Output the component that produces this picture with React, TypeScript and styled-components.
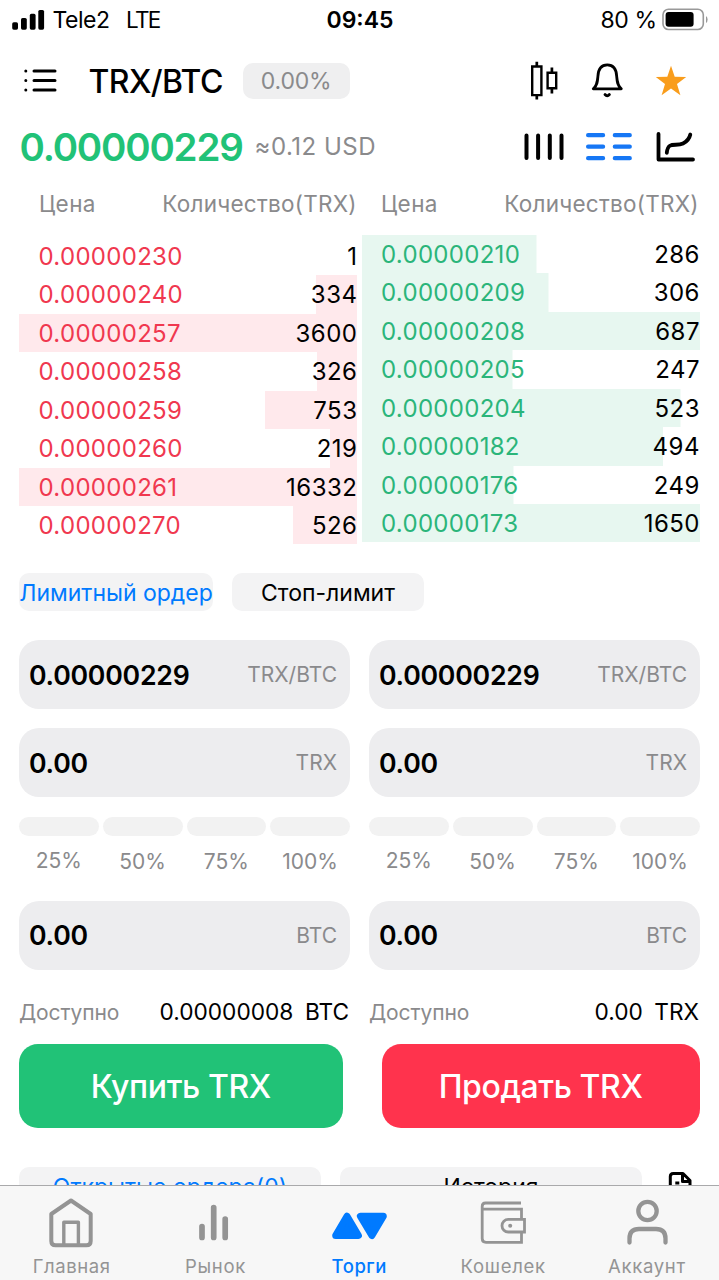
import React from 'react';
import styled, { createGlobalStyle } from 'styled-components';

const colors = {
  green: '#21c277',
  red: '#ff334d',
  blue: '#007aff',
  grey: '#8a8a8c',
  field: '#ededef',
  chip: '#f3f3f4',
};

const Global = createGlobalStyle`
  * { box-sizing: border-box; }
  body { margin: 0; background: #fff; color: #000; font-family: Inter, "Liberation Sans", sans-serif; }
  button { font: inherit; border: 0; padding: 0; color: inherit; }
`;

const Screen = styled.div`
  width: 719px;
  height: 1280px;
  display: flex;
  flex-direction: column;
  overflow: hidden;
`;

const Content = styled.main`
  height: 1185px;
  overflow: hidden;
  flex: none;
`;

const Label = styled.span<{ $size: number; $spacing?: number; $weight?: number; $color?: string; $drop?: number }>`
  font-size: ${p => p.$size}px;
  letter-spacing: ${p => p.$spacing ?? 0}px;
  margin-right: ${p => -(p.$spacing ?? 0)}px;
  padding-top: ${p => (p.$drop ?? 0) * 2}px;
  font-weight: ${p => p.$weight ?? 400};
  color: ${p => p.$color ?? 'inherit'};
  white-space: pre;
  line-height: 1.2;
`;

const StatusBar = styled.header`
  height: 40px;
  padding: 0 11px 0 12px;
  display: grid;
  grid-template-columns: 1fr auto 1fr;
  align-items: center;
`;

const StatusGroup = styled.div<{ $end?: boolean }>`
  display: flex;
  align-items: center;
  justify-content: ${p => (p.$end ? 'flex-end' : 'flex-start')};
  gap: ${p => (p.$end ? 5 : 7.5)}px;
`;

const Network = styled.div`
  display: flex;
  gap: 16px;
`;

const PairBar = styled.div`
  height: 82px;
  padding: 0 32px 0 24px;
  display: flex;
  align-items: center;
`;

const PairName = styled.h1`
  margin: 0 0 0 31.5px;
  padding-top: 1px;
  width: 154px;
  font-size: 32px;
  letter-spacing: -0.6px;
  font-weight: 500;
  line-height: 38px;
  white-space: nowrap;
`;

const ChangeBadge = styled.span`
  width: 107.5px;
  height: 36px;
  border-radius: 10px;
  background: #efeff0;
  display: flex;
  align-items: center;
  justify-content: center;
`;

const IconRow = styled.div<{ $first: number; $second: number }>`
  margin-left: auto;
  display: flex;
  align-items: center;
  svg:nth-child(2) { margin-left: ${p => p.$first}px; }
  svg:nth-child(3) { margin-left: ${p => p.$second}px; }
`;

const PriceBar = styled.div`
  height: 50px;
  padding: 0 23px 0 19.5px;
  display: flex;
  align-items: center;
`;

const LastPrice = styled.strong`
  width: 235px;
  padding-top: 1px;
  font-size: 38.5px;
  letter-spacing: -1.2px;
  line-height: 48px;
  font-weight: 600;
  color: ${colors.green};
  white-space: nowrap;
  margin-top: -2px;
`;

const BookHead = styled.div`
  height: 63px;
  padding: 16px 20px 0 39px;
  display: grid;
  grid-template-columns: 317.5px 317.5px;
  column-gap: 24.5px;
`;

const HeadPair = styled.div`
  display: flex;
  justify-content: space-between;
  align-items: center;
  height: 31.5px;
`;

const Book = styled.section`
  display: grid;
  grid-template-columns: 338px 338px;
  column-gap: 4.5px;
  padding-left: 19px;
  height: 338px;
`;

const Side = styled.div<{ $offset?: number }>`
  padding-top: ${p => p.$offset ?? 0}px;
`;

const BookRow = styled.div<{ $fill: number; $side: 'ask' | 'bid' }>`
  height: 38px;
  &:nth-child(even):not(:last-child) { height: 39px; }
  padding: 0 0 0 19.5px;
  display: flex;
  align-items: center;
  justify-content: space-between;
  background: linear-gradient(${p => (p.$side === 'ask' ? '#ffe9ec, #ffe9ec' : '#e7f7f0, #e7f7f0')}) no-repeat
    ${p => (p.$side === 'ask' ? 'right' : 'left')} / ${p => p.$fill}px 100%;
`;

const OrderTabs = styled.div`
  display: flex;
  gap: 19px;
  padding-left: 19px;
  height: 67px;
`;

const Chip = styled.button<{ $width: number; $active?: boolean }>`
  width: ${p => p.$width}px;
  height: 38px;
  border-radius: 10px;
  background: ${colors.chip};
  color: ${p => (p.$active ? colors.blue : '#000')};
  display: flex;
  align-items: center;
  justify-content: center;
  flex: none;
`;

const Forms = styled.section`
  display: grid;
  grid-template-columns: 331px 331px;
  column-gap: 19px;
  padding-left: 19px;
  height: 404px;
`;

const Form = styled.div`
  display: flex;
  flex-direction: column;
`;

const Field = styled.div<{ $gap: number }>`
  height: 69px;
  margin-bottom: ${p => p.$gap}px;
  padding: 0 13px 0 10px;
  border-radius: 20px;
  background: ${colors.field};
  display: flex;
  align-items: center;
  justify-content: space-between;
`;

const Steps = styled.div`
  display: grid;
  grid-template-columns: repeat(4, 1fr);
  column-gap: 4px;
  height: 84px;
`;

const Step = styled.div`
  display: flex;
  flex-direction: column;
  align-items: center;
  gap: 12px;
  &:not(:first-child) { gap: 13px; }
  &::before {
    content: '';
    width: 100%;
    height: 19px;
    border-radius: 10px;
    background: #f2f2f2;
  }
`;

const Balance = styled.div`
  display: flex;
  align-items: center;
  justify-content: space-between;
  height: 30px;
  padding-right: 1px;
`;

const Funds = styled.div`
  display: flex;
  gap: 11.5px;
`;

const Actions = styled.div`
  display: flex;
  justify-content: space-between;
  padding: 0 19px;
  height: 123px;
`;

const ActionButton = styled.button<{ $width: number; $bg: string }>`
  width: ${p => p.$width}px;
  height: 84px;
  border-radius: 19px;
  background: ${p => p.$bg};
  color: #fff;
  display: flex;
  align-items: center;
  justify-content: center;
`;

const HistoryTabs = styled.div`
  display: flex;
  gap: 19px;
  padding-left: 19px;
`;

const DocSlot = styled.div`
  margin: 5px 0 0 7px;
`;

const TabBar = styled.nav`
  height: 95px;
  flex: none;
  background: #f7f7f7;
  border-top: 1px solid #a9a9ab;
  display: grid;
  grid-template-columns: repeat(5, 1fr);
`;

const TabItem = styled.a<{ $active?: boolean }>`
  color: ${p => (p.$active ? colors.blue : '#949494')};
  display: flex;
  flex-direction: column;
  align-items: center;
  padding: 8px 1px 0 0;
  gap: 5px;
`;

const Icon = styled.svg`
  display: block;
  flex: none;
  overflow: visible;
`;

const Line = styled(Icon).attrs({ fill: 'none', stroke: 'currentColor' })``;

const asks: [string, string, number][] = [
  ['0.00000230', '1', 0],
  ['0.00000240', '334', 41.5],
  ['0.00000257', '3600', 338],
  ['0.00000258', '326', 40.5],
  ['0.00000259', '753', 92],
  ['0.00000260', '219', 27],
  ['0.00000261', '16332', 338],
  ['0.00000270', '526', 64.5],
];

const bids: [string, string, number][] = [
  ['0.00000210', '286', 174.5],
  ['0.00000209', '306', 186.5],
  ['0.00000208', '687', 338],
  ['0.00000205', '247', 150.5],
  ['0.00000204', '523', 318.5],
  ['0.00000182', '494', 301],
  ['0.00000176', '249', 151.5],
  ['0.00000173', '1650', 338],
];

const OrderSide = ({ rows, side }: { rows: [string, string, number][]; side: 'ask' | 'bid' }) => (
  <Side $offset={side === 'ask' ? 2 : 0}>
    {rows.map(([price, amount, fill]) => (
      <BookRow key={price} $fill={fill} $side={side}>
        <Label $size={24} $spacing={0.3} $drop={1.3} $color={side === 'ask' ? '#f0384f' : '#2bb57a'}>{price}</Label>
        <Label $size={24} $spacing={0.5} $drop={1.3}>{amount}</Label>
      </BookRow>
    ))}
  </Side>
);

const Amount = ({ value, unit }: { value: string; unit: string }) => (
  <>
    <Label $size={26.7} $spacing={-0.25} $drop={0.5} $weight={600}>{value}</Label>
    <Label $size={21} $drop={0.5} $color={colors.grey}>{unit}</Label>
  </>
);

const OrderForm = ({ balance, unit }: { balance: string; unit: string }) => (
  <Form>
    <Field $gap={19}><Amount value="0.00000229" unit="TRX/BTC" /></Field>
    <Field $gap={19.5}><Amount value="0.00" unit="TRX" /></Field>
    <Steps>
      {['25%', '50%', '75%', '100%'].map(s => (
        <Step key={s}><Label $size={21} $color={colors.grey}>{s}</Label></Step>
      ))}
    </Steps>
    <Field $gap={27}><Amount value="0.00" unit="BTC" /></Field>
    <Balance>
      <Label $size={21} $spacing={-0.1} $drop={0.6} $color={colors.grey}>Доступно</Label>
      <Funds>
        <Label $size={22.7} $drop={0.6}>{balance}</Label>
        <Label $size={22.7} $drop={0.6}>{unit}</Label>
      </Funds>
    </Balance>
  </Form>
);

export default function App() {
  return (
    <Screen>
      <Global />
      <Content>
        <StatusBar>
          <StatusGroup>
            <Icon width="33" height="20" viewBox="0 0 33 20">
              <rect x="0.2" y="12.3" width="5.8" height="7.4" rx="1.6" />
              <rect x="9" y="8" width="5.8" height="11.7" rx="1.6" />
              <rect x="17.8" y="3.8" width="5.8" height="15.9" rx="1.6" />
              <rect x="26.3" y="0" width="5.8" height="19.7" rx="1.6" />
            </Icon>
            <Network>
              <Label $size={23} $spacing={-0.5} $drop={0.5}>Tele2</Label>
              <Label $size={22.5} $spacing={-1.6} $drop={0.2}>LTE</Label>
            </Network>
          </StatusGroup>
          <Label $size={23} $weight={600} $drop={0.5}>09:45</Label>
          <StatusGroup $end>
            <Label $size={23} $spacing={-0.4} $drop={0.8}>80 %</Label>
            <Line width="46" height="22" viewBox="0 0 46 22">
              <rect x="1" y="0.3" width="40.3" height="20.2" rx="5.5" stroke="#999" strokeWidth="1.6" />
              <rect x="3.6" y="3.1" width="28" height="14.6" rx="3" fill="#000" stroke="none" />
              <path d="M44 7v7q1.6-1 1.6-3.5t-1.6-3.5z" fill="#999" stroke="none" />
            </Line>
          </StatusGroup>
        </StatusBar>

        <PairBar>
          <Line width="33" height="22" viewBox="0 0 33 22" strokeLinecap="round" strokeWidth="3">
            <path d="M10 1h21M10 10.5h21M10 20h21" />
            <path d="M1.8 1h.01M1.8 10.5h.01M1.8 20h.01" />
          </Line>
          <PairName>TRX/BTC</PairName>
          <ChangeBadge><Label $size={23} $spacing={-0.2} $drop={1} $color={colors.grey}>0.00%</Label></ChangeBadge>
          <IconRow $first={34} $second={32}>
            <Line width="28" height="40" viewBox="0 0 28 40" strokeWidth="2.4">
              <path d="M3.2 5.5h9.2v28.6H3.2zM18.6 11.8h8.6v15.4h-8.6z" />
              <path d="M7.8.8v4.7M7.8 34v4.6M22.9 6.5v5M22.9 27v5.5" strokeWidth="2.7" />
            </Line>
            <Line width="32" height="36" viewBox="0 0 32 36" strokeWidth="2.8" strokeLinecap="round" strokeLinejoin="round">
              <path d="M2.3 25.8h28c-4-3.4-4.2-7.6-4.6-12.5C25.3 6 21.8 1.9 16.3 1.9S7.3 6 6.9 13.3C6.5 18.2 6.3 22.4 2.3 25.8z" />
              <path d="M14 31.5q2.2 2.6 4.4 0" />
            </Line>
            <Icon width="32" height="32" viewBox="0 0 32 32">
              <path fill="#f99d1c" d="M16 .8l3.7 11 11.5.2-9.2 7 3.4 11.3L16 23.5l-9.4 6.8L10 19 .8 12l11.5-.2z" />
            </Icon>
          </IconRow>
        </PairBar>

        <PriceBar>
          <LastPrice>0.00000229</LastPrice>
          <Label $size={24} $spacing={0.5} $drop={0.8} $color={colors.grey}>≈0.12 USD</Label>
          <IconRow $first={21} $second={23}>
            <Line width="40" height="28" viewBox="0 0 40 28" strokeWidth="4" strokeLinecap="round">
              <path d="M2.5 2.5V25M14.1 2.5V25M25.8 2.5V25M37.5 2.5V25" />
            </Line>
            <Line width="48" height="28" viewBox="0 0 48 28" strokeWidth="4.2" strokeLinecap="round" color="#1677f5">
              <path d="M3.1 2.2h15M3.1 13.7h15M3.1 25.2h15M29.8 2.2h15M29.8 13.7h15M29.8 25.2h15" />
            </Line>
            <Line width="40" height="30" viewBox="0 0 40 30" strokeWidth="3.8" strokeLinecap="round" strokeLinejoin="round">
              <path d="M2.5 2v25.5H37" />
              <path d="M10.8 20.8C12 8.5 20 15 27 11.5Q33 8.500 34.3 2.5" />
            </Line>
          </IconRow>
        </PriceBar>

        <BookHead>
          {[0, 1].map(i => (
            <HeadPair key={i}>
              <Label $size={22.5} $spacing={0.4} $color={colors.grey}>Цена</Label>
              <Label $size={22.5} $spacing={0.25} $color={colors.grey}>Количество(TRX)</Label>
            </HeadPair>
          ))}
        </BookHead>
        <Book>
          <OrderSide rows={asks} side="ask" />
          <OrderSide rows={bids} side="bid" />
        </Book>

        <OrderTabs>
          <Chip $width={194} $active><Label $size={23} $drop={2}>Лимитный ордер</Label></Chip>
          <Chip $width={192}><Label $size={23} $drop={2}>Стоп-лимит</Label></Chip>
        </OrderTabs>

        <Forms>
          <OrderForm balance="0.00000008" unit="BTC" />
          <OrderForm balance="0.00" unit="TRX" />
        </Forms>

        <Actions>
          <ActionButton $width={324} $bg={colors.green}><Label $size={32} $weight={450} $spacing={-0.4} $drop={1}>Купить TRX</Label></ActionButton>
          <ActionButton $width={318.5} $bg={colors.red}><Label $size={32} $weight={450} $spacing={-0.4} $drop={1}>Продать TRX</Label></ActionButton>
        </Actions>

        <HistoryTabs>
          <Chip $width={302} $active><Label $size={23} $drop={1.5}>Открытые ордера(0)</Label></Chip>
          <Chip $width={302}><Label $size={23} $drop={1.5}>История</Label></Chip>
          <DocSlot>
            <Line width="26" height="30" viewBox="0 0 26 30" strokeWidth="3" strokeLinejoin="round">
              <path d="M2.3 28V4.5q0-3 3-3H15l7 7V28M14.5 2v7.5H22M7.3 11h4" />
            </Line>
          </DocSlot>
        </HistoryTabs>
      </Content>

      <TabBar>
        <TabItem>
          <Line width="48" height="56" viewBox="0 0 48 56" strokeWidth="4" strokeLinejoin="round">
            <path d="M24 6.5L4.3 20v27q0 4.3 4.3 4.3h30.8q4.3 0 4.3-4.3V20z" />
            <path d="M16.8 51V28.2h14.6V51" strokeWidth="3.4" />
          </Line>
          <Label $size={18.5} $spacing={0.6}>Главная</Label>
        </TabItem>
        <TabItem>
          <Line width="48" height="56" viewBox="0 0 48 56" strokeWidth="5.7" strokeLinecap="round">
            <path d="M11 32.5v11M22.7 13.5v30M34.2 25v18.5" />
          </Line>
          <Label $size={18.5} $spacing={0.7}>Рынок</Label>
        </TabItem>
        <TabItem $active>
          <Line width="56" height="56" viewBox="0 0 56 56" strokeWidth="7" strokeLinejoin="round">
            <path fill="currentColor" d="M16 22.2L27.4 41.5H4.7z" />
            <path fill="currentColor" d="M29.4 22.2h22.9L40.9 41.5z" />
          </Line>
          <Label $size={18.5} $spacing={0.5} $weight={500}>Торги</Label>
        </TabItem>
        <TabItem>
          <Line width="48" height="56" viewBox="0 0 48 56" strokeWidth="2.8">
            <path d="M42 9H6.5Q3.2 9 3.2 12.5v32q0 3.8 3.8 3.8h35.5V38M3.2 15.2h39.3v10" />
            <path d="M45.5 25.4H29.3a6.3 6.3 0 0 0 0 12.6h16.2z" />
            <circle cx="31.2" cy="31.7" r="2" fill="currentColor" stroke="none" />
          </Line>
          <Label $size={18.5} $spacing={0.7}>Кошелек</Label>
        </TabItem>
        <TabItem>
          <Line width="48" height="56" viewBox="0 0 48 56" strokeWidth="4.3">
            <circle cx="24.5" cy="17" r="9.2" />
            <path strokeLinecap="round" d="M6.5 48.5v-4Q6.5 35 16 35h17q9.5 0 9.5 9.5v4" />
          </Line>
          <Label $size={18.5} $spacing={0.7}>Аккаунт</Label>
        </TabItem>
      </TabBar>
    </Screen>
  );
}
